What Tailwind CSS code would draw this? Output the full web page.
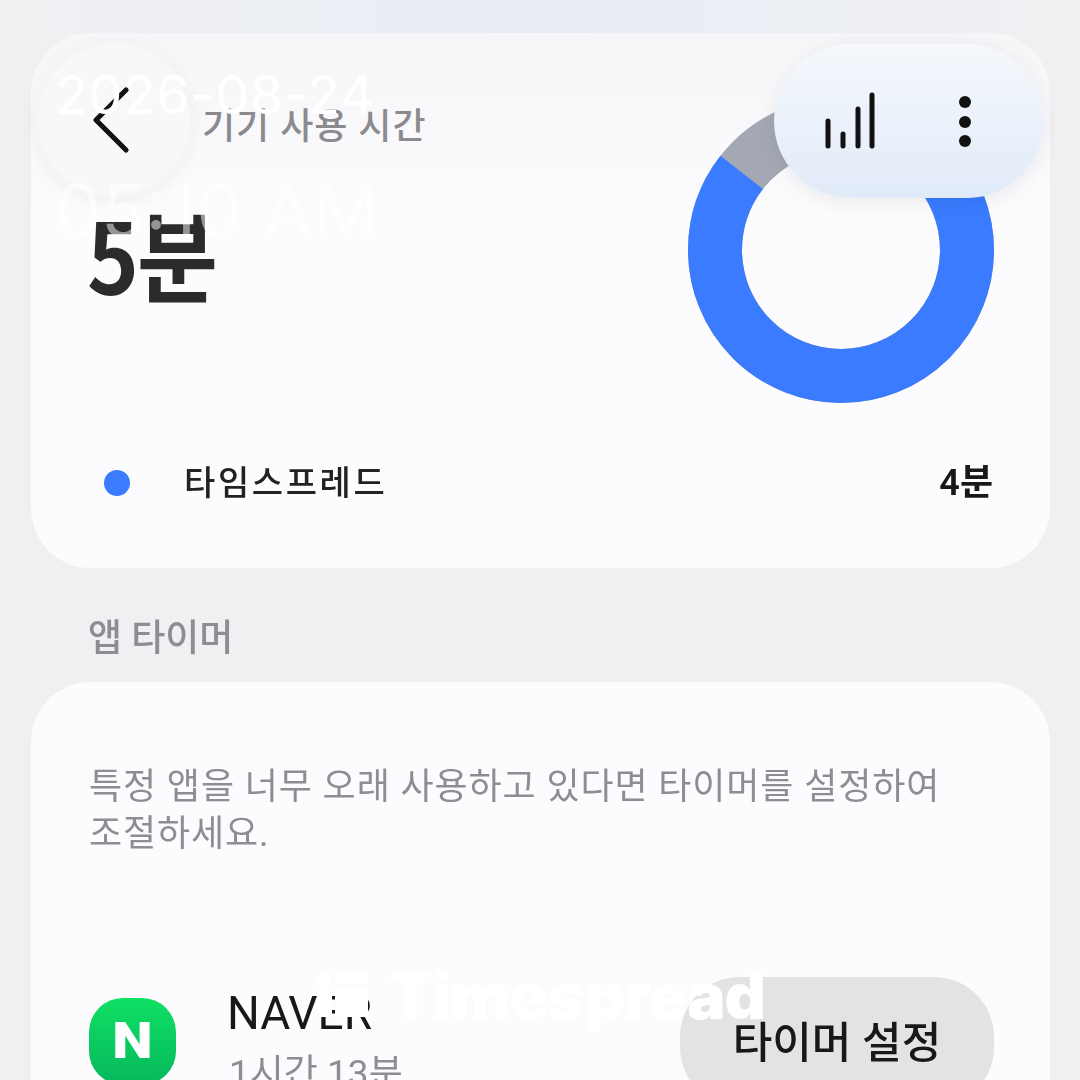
<!DOCTYPE html>
<html lang="ko">
<head>
  <meta charset="UTF-8" />
  <meta name="viewport" content="width=device-width, initial-scale=1.0"/>
  <title>기기 사용 시간</title>
  <script src="https://cdn.jsdelivr.net/npm/@tailwindcss/browser@4"></script>
</head>
<body class="bg-[#f0f0f2] font-['Roboto','Noto_Sans_CJK_KR',sans-serif]">
<div class="relative w-[1080px] h-[1080px] overflow-hidden">

  <!-- page content -->
  <div class="h-full flex flex-col blur-[0.5px]">
    <div class="h-[33px] shrink-0 bg-gradient-to-r from-[#f0f0f2] via-[#e8edf5] to-[#f0f0f2]"></div>

    <div class="ml-[31px] mr-[30px] h-[535px] shrink-0 bg-gradient-to-b from-[#f6f6f8] to-[#fcfcfe] to-[35%] rounded-[60px] px-[58px] flex flex-col">
      <div class="flex justify-between h-[372px]">
        <div class="pt-[66px]">
          <p class="pl-[113px] text-[36px] leading-[56px] tracking-[1px] font-medium text-[#8b8b8f]">기기 사용 시간</p>
          <p class="mt-[44px] -ml-[2px] origin-left scale-y-[1.12] font-['Noto_Sans_CJK_KR'] text-[88px] leading-[106px] tracking-[-2px] font-bold text-[#2b2b2d]">5분</p>
        </div>
        <svg class="mt-[64px] -mr-[2px] w-[306px] h-[306px]" viewBox="0 0 306 306">
          <g fill="none" stroke-width="54" transform="rotate(-90 153 153)">
            <circle cx="153" cy="153" r="126" stroke="#a3a8b4"/>
            <circle cx="153" cy="153" r="126" stroke="#3a7bff" stroke-dasharray="677 792"/>
          </g>
        </svg>
      </div>
      <div class="mt-[53px] flex items-center">
        <span class="w-[26px] h-[26px] ml-[15px] rounded-full bg-[#3a7bff]"></span>
        <span class="ml-[54px] text-[34px] leading-[50px] tracking-[2.6px] font-medium text-[#222224]">타임스프레드</span>
        <span class="ml-auto -mr-[1px] text-[36px] leading-[50px] font-semibold text-[#18181b]">4분</span>
      </div>
    </div>

    <p class="mt-[46px] ml-[88px] text-[37px] leading-[50px] font-medium text-[#8e8e92]">앱 타이머</p>

    <div class="mt-[18px] ml-[31px] mr-[30px] flex-1 bg-[#fcfcfe] rounded-t-[60px] px-[58px] pt-[82px]">
      <p class="text-[36px] leading-[47px] tracking-[0.9px] text-[#8e8e92]">특정 앱을 너무 오래 사용하고 있다면 타이머를 설정하여<br>조절하세요.</p>
      <div class="mt-[119px] flex">
        <div class="mt-[21px] w-[87px] h-[87px] rounded-[34px] bg-gradient-to-b from-[#10e065] to-[#06b85c] flex items-center justify-center text-white">
          <span class="scale-x-[1.15] text-[50px] font-black">N</span>
        </div>
        <div class="ml-[51px] mt-[8px]">
          <p class="text-[46px] leading-[56px] text-[#18181b]">NAVER</p>
          <p class="ml-[2px] mt-[5px] text-[37px] leading-[56px] text-[#8e8e92]">1시간 13분</p>
        </div>
        <div class="ml-auto -mr-[2px] w-[314px] h-[130px] rounded-[60px] bg-[#e3e3e5] flex justify-center pt-[35px] text-[43px] leading-[62px] font-medium text-[#18181b]">타이머 설정</div>
      </div>
    </div>
  </div>

  <!-- floating buttons -->
  <div class="absolute left-[38px] top-[44px] w-[152px] h-[152px] rounded-full bg-[#f8f8f9] ring-[4px] ring-white/20 shadow-[0_4px_20px_rgba(0,0,0,0.07)] flex items-center justify-center">
    <svg class="w-[50px] h-[76px] blur-[0.4px]" viewBox="0 0 50 76" fill="none" stroke="#111" stroke-width="5" stroke-linecap="round" stroke-linejoin="round"><path d="M37 8 L7 38 L37 68"/></svg>
  </div>
  <div class="absolute left-[774px] top-[44px] w-[270px] h-[154px] rounded-[77px] bg-gradient-to-b from-[#f5f8fc] to-[#e1ebf8] shadow-[0_4px_20px_rgba(0,0,0,0.07)]">
    <svg class="absolute left-[48px] top-[44px] w-[56px] h-[64px] blur-[0.4px]" viewBox="0 0 56 64" stroke="#111" stroke-width="5" stroke-linecap="round"><path d="M6 33 V58 M21 46 V58 M36 21 V58 M50 7 V58"/></svg>
    <svg class="absolute left-[180px] top-[50px] w-[22px] h-[56px] blur-[0.4px]" viewBox="0 0 22 56" fill="#111"><circle cx="11" cy="8" r="6"/><circle cx="11" cy="28" r="6"/><circle cx="11" cy="47" r="6"/></svg>
  </div>

  <!-- watermark -->
  <p class="absolute left-[55px] top-[62px] font-['Inter'] text-[54px] leading-[66px] tracking-[0.4px] text-white">2026-08-24</p>
  <p class="absolute left-[55px] top-[167px] font-['Inter'] text-[73px] leading-[88px] text-white/50">05:10 AM</p>
  <div class="absolute left-[318px] top-[962px] flex items-center gap-[21px] text-white">
    <svg class="w-[50px] h-[52px]" viewBox="0 0 50 52" fill="#fff"><circle cx="7" cy="10" r="7"/><rect x="0" y="18" width="14" height="29"/><rect x="17" y="3" width="33" height="10"/><rect x="17" y="18" width="33" height="29"/></svg>
    <span class="font-['Inter'] text-[64px] leading-[68px] font-black tracking-[-1px]">Timespread</span>
  </div>
</div>
</body>
</html>
